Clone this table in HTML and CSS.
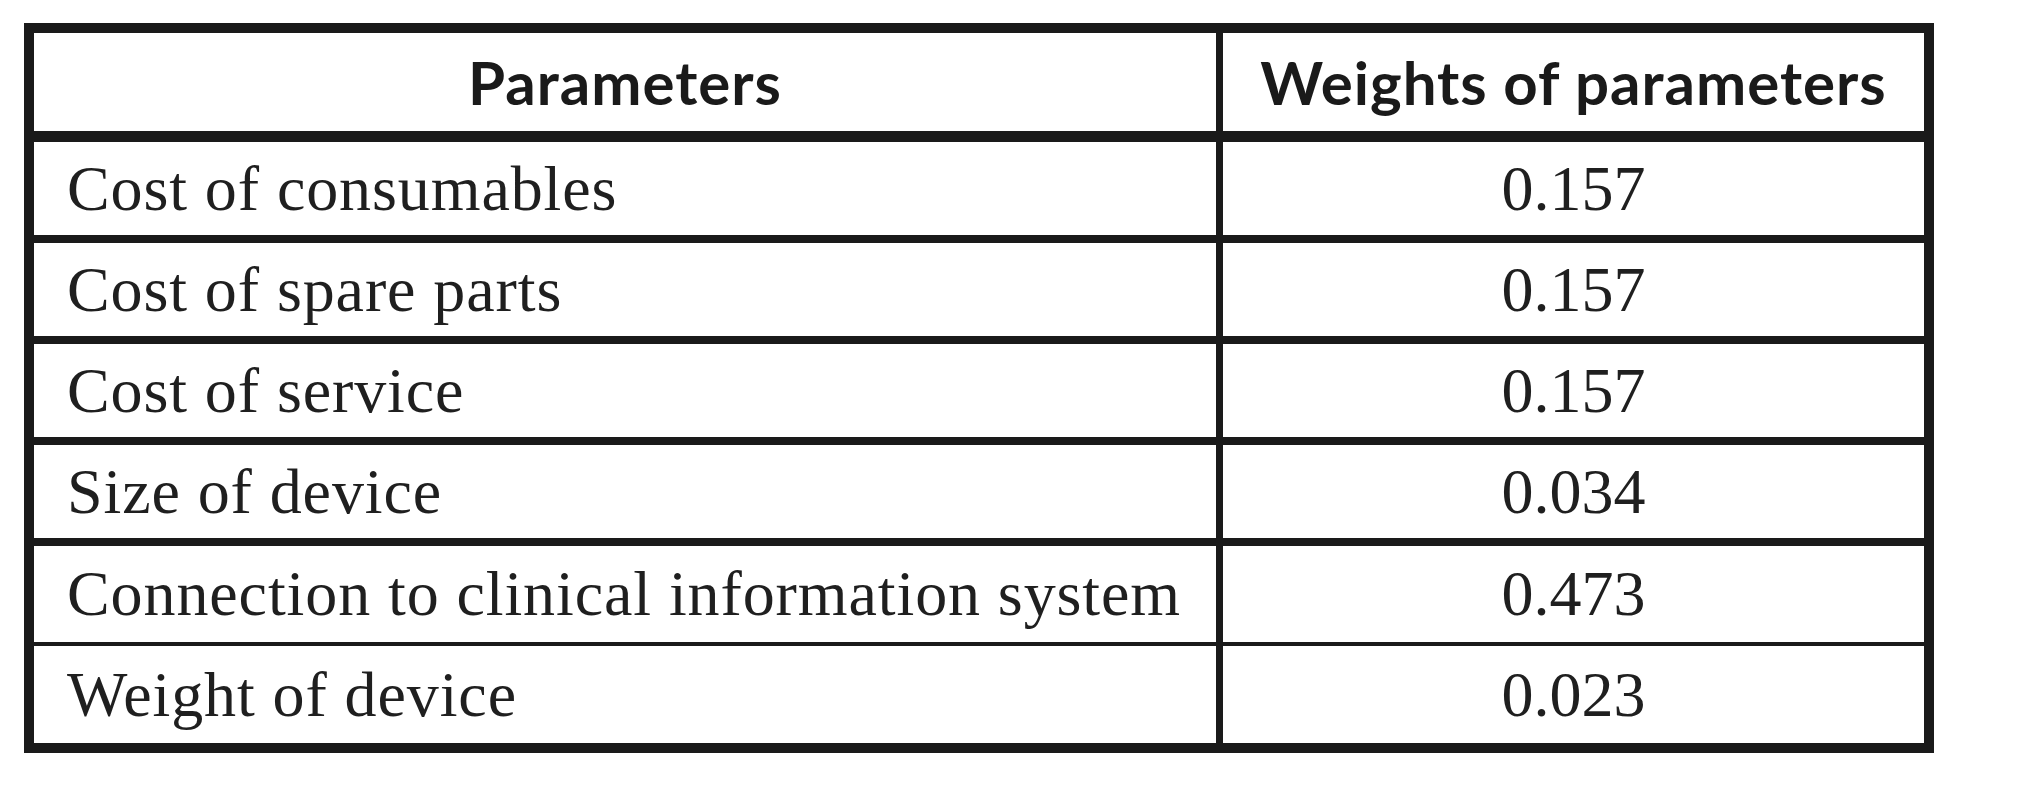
FILE: index.html
```html
<!DOCTYPE html>
<html lang="en">
<head>
<meta charset="utf-8">
<title>Parameters and weights</title>
<link rel="stylesheet" href="styles.css">
</head>
<body>
<div class="page">
  <table class="weights">
    <thead>
      <tr class="head-row">
        <th class="col-param">Parameters</th>
        <th class="col-weight">Weights of parameters</th>
      </tr>
    </thead>
    <tbody>
      <tr class="row">
        <td class="col-param">Cost of consumables</td>
        <td class="col-weight">0.157</td>
      </tr>
      <tr class="row">
        <td class="col-param">Cost of spare parts</td>
        <td class="col-weight">0.157</td>
      </tr>
      <tr class="row">
        <td class="col-param">Cost of service</td>
        <td class="col-weight">0.157</td>
      </tr>
      <tr class="row">
        <td class="col-param">Size of device</td>
        <td class="col-weight">0.034</td>
      </tr>
      <tr class="row row-thin">
        <td class="col-param">Connection to clinical information system</td>
        <td class="col-weight">0.473</td>
      </tr>
      <tr class="row row-last">
        <td class="col-param">Weight of device</td>
        <td class="col-weight">0.023</td>
      </tr>
    </tbody>
  </table>
</div>
</body>
</html>
```

FILE: styles.css
```css
html, body {
  margin: 0;
  padding: 0;
  background: #ffffff;
}

.page {
  padding: 23px 0 0 24px;
}

.weights {
  border-collapse: separate;
  border-spacing: 0;
  border: 10px solid #1a1a1a;
  width: 1910px;
  table-layout: fixed;
  color: #1f1f1f;
}

.weights th,
.weights td {
  padding: 0;
  vertical-align: middle;
}

.weights .col-param {
  width: 1182px;
  border-right: 7px solid #1a1a1a;
}

.head-row th {
  height: 98px;
  border-bottom: 11px solid #1a1a1a;
  font-family: Lato, "Open Sans", sans-serif;
  font-weight: 700;
  font-size: 60px;
  letter-spacing: 1px;
  text-align: center;
  color: #1a1a1a;
}

.row td {
  height: 93px;
  border-bottom: 8px solid #1a1a1a;
  font-family: "Liberation Serif", "Times New Roman", serif;
  font-size: 64px;
  font-weight: 400;
}

.row-thin td {
  height: 96px;
  border-bottom-width: 4px;
}

.row-last td {
  height: 97px;
  border-bottom: 0;
}

.row td.col-param {
  text-align: left;
  padding-left: 33px;
  letter-spacing: 0.9px;
}

.row td.col-weight {
  text-align: center;
}
```
